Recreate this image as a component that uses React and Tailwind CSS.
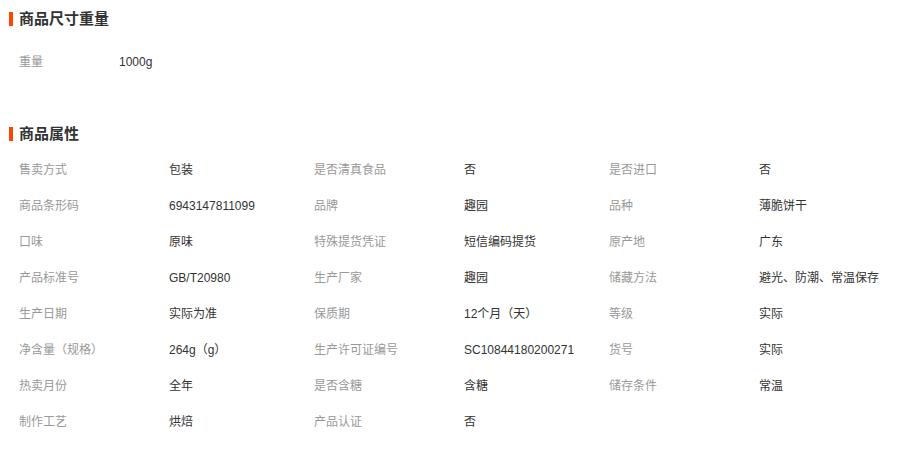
const font = { fontFamily: '"Liberation Sans", "Noto Sans CJK SC", sans-serif' };

const attrs = [
  ["售卖方式", "包装", "是否清真食品", "否", "是否进口", "否"],
  ["商品条形码", "6943147811099", "品牌", "趣园", "品种", "薄脆饼干"],
  ["口味", "原味", "特殊提货凭证", "短信编码提货", "原产地", "广东"],
  ["产品标准号", "GB/T20980", "生产厂家", "趣园", "储藏方法", "避光、防潮、常温保存"],
  ["生产日期", "实际为准", "保质期", "12个月（天）", "等级", "实际"],
  ["净含量（规格）", "264g（g）", "生产许可证编号", "SC10844180200271", "货号", "实际"],
  ["热卖月份", "全年", "是否含糖", "含糖", "储存条件", "常温"],
  ["制作工艺", "烘焙", "产品认证", "否", "", ""],
];

function Heading({ children }) {
  return (
    <div className="flex items-center h-6 pl-[9px]">
      <div className="w-[4px] h-[14px] bg-[#ff4400]" />
      <div className="ml-[6px] text-[15px] font-bold text-[#333] leading-6">{children}</div>
    </div>
  );
}

export default function App() {
  return (
    <div className="w-[898px] h-[452px] bg-white overflow-hidden" style={font}>
      <div className="pt-[7px]">
        <Heading>商品尺寸重量</Heading>
        <div className="mt-[13px] flex items-center h-9 pl-[19px] text-[12px]">
          <div className="w-[100px] text-[#999]">重量</div>
          <div className="text-[#333]">1000g</div>
        </div>
      </div>
      <div className="mt-[42px]">
        <Heading>商品属性</Heading>
        <div className="mt-[6px] pl-[19px] text-[12px]">
          {attrs.map((r, i) => (
            <div key={i} className="flex items-center h-9">
              {[0, 2, 4].map((j) => (
                <div key={j} className="flex w-[295px]">
                  <div className="w-[150px] text-[#999]">{r[j]}</div>
                  <div className="w-[145px] text-[#333] whitespace-nowrap">{r[j + 1]}</div>
                </div>
              ))}
            </div>
          ))}
        </div>
      </div>
    </div>
  );
}
